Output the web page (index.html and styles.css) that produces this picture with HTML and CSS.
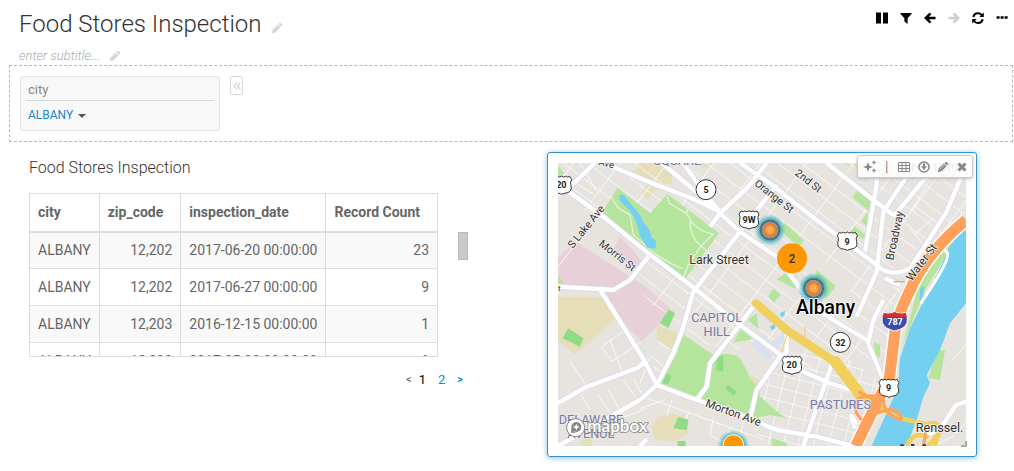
FILE: index.html
```html
<!DOCTYPE html>
<html lang="en">
<head>
<meta charset="utf-8">
<meta name="viewport" content="width=device-width, initial-scale=1">
<title>Food Stores Inspection</title>
<link rel="stylesheet" href="styles.css">
</head>
<body>
<svg class="defs" aria-hidden="true">
  <symbol id="pencil" viewBox="0 0 16 16"><path d="M1 15l1-4.600 7-7L12.600 7l-7 7zM10 2.500l1.300-1.300q.7-.7 1.400 0l2.100 2.100q.7.7 0 1.400L13.500 6z" fill="currentColor"/><path d="M2.500 11.500l2 2M4.500 10.500l5.500-5.500" stroke="#fff" stroke-width=".8"/></symbol>
</svg>
<header class="top">
  <div>
    <div class="title-row"><h1>Food Stores Inspection</h1><button class="edit" aria-label="Edit title"><svg><use href="#pencil"/></svg></button></div>
    <div class="subtitle-row"><input class="subtitle" aria-label="Subtitle" placeholder="enter subtitle..."><button class="edit" aria-label="Edit subtitle"><svg><use href="#pencil"/></svg></button></div>
  </div>
  <div class="toolbar">
    <button aria-label="Pause"><svg viewBox="0 0 14 14"><path d="M1 1.500h5v11H1zM8 1.500h5v11H8z"/></svg></button>
    <button aria-label="Filter"><svg viewBox="0 0 14 14"><path d="M1.500 2h11v1L8.600 7.200V13L5.400 10.600V7.200L1.500 3z"/></svg></button>
    <button aria-label="Back"><svg viewBox="0 0 14 14"><path d="M7.500 2.300L2.800 7l4.700 4.700M3 7h9.500" class="stroke"/></svg></button>
    <button aria-label="Forward" disabled><svg viewBox="0 0 14 14"><path d="M6.500 2.300L11.200 7l-4.700 4.700M11 7H1.500" class="stroke"/></svg></button>
    <button aria-label="Refresh"><svg viewBox="0 0 14 14"><path d="M2.300 6A4.800 4.800 0 0 1 10.900 4.200M11.700 8.200A4.800 4.800 0 0 1 3.100 10" class="stroke thin"/><path d="M12.800 1.500V6H8.300zM1.200 12.600V8.100h4.500z"/></svg></button>
    <button aria-label="More"><svg viewBox="0 0 14 14"><path d="M1.600 5.200h3v2.600h-3zM5.600 5.200h3v2.600h-3zM9.600 5.200h3v2.600h-3z"/></svg></button>
  </div>
</header>
<section class="filters">
  <div class="filter">
    <label for="city">city</label>
    <div class="choice"><select id="city"><option>ALBANY</option></select><svg viewBox="0 0 8 5"><path d="M0 0h8L4 4z"/></svg></div>
  </div>
  <button class="collapse" aria-label="Collapse filters"><svg viewBox="0 0 8 8"><path d="M4 .5L.8 4 4 7.500M7.500.5L4.300 4l3.200 3.500"/></svg></button>
</section>
<main>
  <section class="data">
    <h2>Food Stores Inspection</h2>
    <div class="scroll-area">
      <div class="table-clip">
        <table>
          <thead><tr><th>city</th><th class="sortable">zip_code</th><th>inspection_date</th><th class="sortable">Record Count</th></tr></thead>
          <tbody>
            <tr><td>ALBANY</td><td class="num">12,202</td><td>2017-06-20 00:00:00</td><td class="num">23</td></tr>
            <tr><td>ALBANY</td><td class="num">12,202</td><td>2017-06-27 00:00:00</td><td class="num">9</td></tr>
            <tr><td>ALBANY</td><td class="num">12,203</td><td>2016-12-15 00:00:00</td><td class="num">1</td></tr>
            <tr><td>ALBANY</td><td class="num">12,203</td><td>2017-05-03 00:00:00</td><td class="num">8</td></tr>
          </tbody>
        </table>
      </div>
      <div class="thumb"></div>
    </div>
    <nav class="pages" aria-label="Pages"><span class="off">&lt;</span><span class="now">1</span><a href="#2">2</a><a class="next" href="#next">&gt;</a></nav>
  </section>
  <section class="map-card">
    <svg class="map" viewBox="54 54 1224 849" preserveAspectRatio="xMidYMid slice" role="img" aria-label="Map of Albany">
      <defs>
        <pattern id="blocks" width="112" height="43" patternUnits="userSpaceOnUse" patternTransform="rotate(37)"><path d="M0 1H112M1 0V43" class="lane"/></pattern>
        <pattern id="blocks2" width="44" height="38" patternUnits="userSpaceOnUse" patternTransform="rotate(14)"><path d="M0 1H44M1 0V38" class="lane"/></pattern>
        <radialGradient id="glow"><stop offset=".5" stop-color="#1797a5"/><stop offset=".7" stop-color="#35a9b2" stop-opacity=".75"/><stop offset="1" stop-color="#58c3ca" stop-opacity="0"/></radialGradient>
        <radialGradient id="core"><stop offset="0" stop-color="#ffb35c"/><stop offset=".38" stop-color="#fba245"/><stop offset=".48" stop-color="#ef7f1c"/><stop offset=".6" stop-color="#e8882f"/><stop offset=".66" stop-color="#8a8a8a"/><stop offset=".78" stop-color="#9aa0a6"/><stop offset=".84" stop-color="#59636e"/><stop offset="1" stop-color="#59737e"/></radialGradient>
        <symbol id="us" viewBox="-32 -30 64 60" overflow="visible"><path d="M-24-26q6 5 12 0 6 5 12-1 6 6 12 1 6 5 12 0l6 10q-6 8-2 18 4 16-10 21Q8 24 0 28-8 24-18 23-32 18-28 2q4-10-2-18z" fill="#fff" stroke="#343434" stroke-width="3"/></symbol>
        <g id="pin"><circle r="48" fill="url(#glow)"/><circle r="31" fill="url(#core)"/></g>
        <path id="roads" d="M80 135L190 215 325 325 470 435 600 540 730 635 790 680 870 715 935 735 970 775M54 150L80 135 165 54M190 54L350 120 455 160 540 200M365 54L480 150 600 260 710 335 830 495 980 585 1030 705M430 54L490 140 540 200M600 54L690 115 810 210 890 270 1010 360Q1050 400 1110 370L1150 310 1220 200 1270 80M860 54L1000 165 1060 210M1100 95L1030 200 1010 380 950 515M1010 54V120L975 320M1160 95L1060 215M680 54L620 130 545 200 510 245M710 120L600 260 460 440 430 545 400 625 350 720 300 765 54 903M325 335L270 405 220 435 54 425M180 435L200 465 315 650 350 720 470 765 580 800 710 855 830 875 940 903M54 775L140 725 290 670 315 650M640 485L510 655 500 725 470 765M720 635L650 735 630 820M740 560v60l-20 25M880 645L790 903M1030 465L1000 525 985 590M1035 400L1080 420M1278 770l-30 10-50 75-40 15M300 903l20-20M950 840q-30-60-5 10"/>
      </defs>
      <path class="land" d="M54 54H1278V903H54z"/>
      <g class="sand"><path d="M300 54H400L395 115 350 122 275 90z"/><path d="M320 120l32 14-30 26-20-12zM475 54h45l-25 15zM54 455h125l65 50-138 123-52-38zM350 540l85 30-25 60-60-48zM900 54h100v40zM335 845q15-35 60-42l52 20-5 45-38 22-60-7zM630 690l30 15-8 25-26-22zM125 880h30v23h-30z"/></g>
      <g class="pink"><path d="M54 340l50-52L325 430 400 500 305 588 215 500 180 440 54 425z"/><path d="M240 273l65 75-20 28-70-52z"/></g>
      <path fill="url(#blocks)" d="M54 54H1278V200L1085 480 1020 660 880 650 690 520 470 430 80 160z"/>
      <path fill="url(#blocks)" d="M435 400L690 520 890 650 780 700 650 620 500 600 430 560z"/>
      <path fill="url(#blocks)" d="M270 405l55-65 135 105-30 110-50-25z"/>
      <path fill="url(#blocks2)" d="M740 630l150-10 140 90-80 193H650V750z"/>
      <path class="land" d="M790 330l130 50 20 90-60 10-60-40z"/>
      <g class="lane"><path d="M190 190L54 365M120 54l50 85M54 80l110 70M210 585l40 105M185 605l65-45M215 650l90-60M183 605l35 45M90 650l50 75M280 700l25 48M250 705l50 70M205 735l35 60M172 748l35 50M150 795l-35-60M340 665l50 30M330 630l70 60M355 590l55 35M330 640l-30 75M305 755l85 28 180 65 100 35M300 790l75-25M395 765l-15 50M450 795l-20 45M520 820l-10 50 60 33M230 780l25 35 65-25M570 850l-20 45M610 830l-15 73M1110 250l50 60M1180 220l-60 50M1120 180l80 60M1180 903l60-30 38-40M990 54l30 35M1200 54l-90 150M1278 600l-45 50"/></g>
      <g class="park"><path d="M233 128L330 205 382 147 537 265 437 400 350 345 290 300 185 205zM432 570L520 630q60-8 75 5 25 35 35 65l30 35-5 85-25-10-160-50-108-45z"/><path d="M54 60l18 25-18 10zM54 395l20 20-20 5zM950 138l42 28-5 33-50-42zM982 200v45l-18-15zM945 245l32 25-8 12-40-22zM732 232l60 55-15 18-58-50zM745 378l28 18-8 35-55-28zM830 375l58 48-27 35-40-30zM700 430l22 20-20 22-18-18zM650 505l-28 20 34 28zM605 548l33 35-60 10zM630 720q60 70 110 100l-50-10-45 10zM695 878l45 15v10h-45zM1215 615l-15 90-35-5 25-85zM1000 590l20 10v40l-12-10zM1128 450q-10-30 12-60l90-130 8 40-80 130-70 170z"/></g>
      <g class="grass"><path d="M385 495l20 10-20 45-25-17zM85 550l45 30-10 25-52-25zM415 815l30 10-5 30-40-5zM412 888h25v15h-25zM530 640l20-10v50l-22-5zM565 720l25 20-8 12-27-22zM380 685l15 8-12 25-15-3z"/></g>
      <path d="M382 152l5 22 50 30q10-20 2 0l15 25q20 30 65 38l-35 35-40 60-13 33M210 150l25 40 35 20 10 60 70 60 55 32 25 10M450 230q0 45 30 70l45 40" class="trail"/>
      <g class="water"><path d="M238 150q15-3 25 14l28 35q15 18 17 30l20 25 8 25 13 10-3 22-24-3-22-35q-8-45-30-75l-30-30z"/><path d="M1278 240L1232 300 1195 380 1145 480 1110 550 1080 640 1075 725 995 903H1100L1130 825 1150 755 1170 715 1160 690 1200 615 1230 535 1278 475zM1140 435q5-15 14-10l-5 30-10 20zM720 505l15-8-2 15-10 5zM690 545l14-8 2 13-12 5z"/></g>
      <g fill="#d9e0f1"><path d="M640 590l30-20 20 20-20 20 30 20-15 15-50-40zM670 520l25-25 15 12-25 30zM690 595l40-30 12 10-30 38zM780 500l30-20 8 15-28 18z"/></g>
      <use href="#roads" class="casing"/>
      <use href="#roads" class="road"/>
      <path class="hw-case" d="M1278 225Q1170 315 1120 415T1065 560L1048 700 1010 775 947 903"/>
      <path class="hw-case thin" d="M1150 325q65-25 72 0 10 20-80 150"/>
      <path class="yellow" d="M648 475L740 555 890 655 960 750 1020 790"/>
      <path class="yellow fat" d="M885 650L965 755"/>
      <path class="yellow narrow" d="M1010 785L1080 820 1160 838 1200 860 1165 903M1100 903q20-45 60-28M1160 838q55-20 25 60"/>
      <path class="yellow line" d="M745 560l-20 60M795 545v45"/>
      <path class="hw" d="M1278 225Q1170 315 1120 415T1065 560L1048 700 1010 775 947 903"/>
      <path class="ramp" d="M1020 755q-90-15-70 50l15 20M970 830q100-70 115-5M1030 760q0 50 55 65M1000 805q-20 5-40 40M955 740l50 25M1160 845l-10 58"/>
      <path d="M1060 410h35" stroke="#ffa05c" stroke-width="4"/>
      <g class="label">
        <text x="448" y="356" font-size="37">Lark Street</text>
        <text x="98" y="312" font-size="32" transform="rotate(-51 98 312)">S Lake Ave</text>
        <text x="175" y="300" font-size="32" transform="rotate(38 175 300)">Morris St</text>
        <text x="175" y="60" font-size="28" transform="rotate(12 175 60)">Ave</text>
        <text x="763" y="88" font-size="32" transform="rotate(38 763 88)">2nd St</text>
        <text x="641" y="119" font-size="32" transform="rotate(38 641 119)">Orange St</text>
        <text x="1060" y="347" font-size="34" transform="rotate(-78 1060 347)">Broadway</text>
        <text x="1115" y="410" font-size="34" transform="rotate(-53 1115 410)">Water St</text>
        <text x="494" y="784" font-size="34" transform="rotate(20 494 784)">Morton Ave</text>
        <text x="1127" y="860" font-size="38">Renssel.</text>
        <text x="54" y="437" font-size="24">t</text>
        <path d="M1081 898h10v5h-10zM1113 897h10v6h-10zM1148 898h10v5h-10z" fill="#333"/>
      </g>
      <g class="area">
        <text x="530" y="531" text-anchor="middle">CAPITOL</text><text x="530" y="574" text-anchor="middle">HILL</text>
        <text x="901" y="791" text-anchor="middle">PASTURES</text>
        <text x="153" y="837" text-anchor="middle">DELAWARE</text><text x="153" y="880" text-anchor="middle">AVENUE</text>
        <text x="412" y="60" text-anchor="middle">SQUARE</text><text x="1113" y="78">HISTORIC</text>
      </g>
      <use href="#pin" x="690" y="255"/><use href="#pin" x="821" y="430"/>
      <circle cx="580" cy="903" r="49" fill="url(#glow)"/><circle cx="580" cy="900" r="31" fill="#ff9800" stroke="#fff" stroke-width="3"/>
      <circle cx="756" cy="340" r="45" fill="#ff9800"/><text class="cluster" x="756" y="353">2</text>
      <text class="city" x="768" y="508">Albany</text>
      <g class="shield">
        <circle cx="498" cy="134" r="30"/><text x="498" y="144">5</text>
        <circle cx="901" cy="592" r="30"/><text x="901" y="602">32</text>
        <use href="#us" x="33" y="90" width="64" height="60"/><text x="64" y="130">20</text>
        <use href="#us" x="595" y="194" width="64" height="60"/><text x="627" y="233">9W</text>
        <use href="#us" x="890" y="258" width="64" height="60"/><text x="921" y="299">9</text>
        <use href="#us" x="724" y="630" width="64" height="60"/><text x="755" y="670">20</text>
        <use href="#us" x="1015" y="699" width="64" height="60"/><text x="1046" y="739">9</text>
        <path d="M1032 503q16 6 32-2 17 8 33 2 8 18 4 30-6 18-37 25-31-7-37-25-4-12 5-30z" fill="#3a4dae" stroke="#fff" stroke-width="3"/><path d="M1032 503q16 6 32-2 17 8 33 2l4 13h-74z" fill="#d32f3b"/><text class="light" x="1065" y="541">787</text>
      </g>
      <g class="brand"><circle cx="107" cy="848" r="27"/><circle class="ring" cx="109" cy="846" r="15"/><path d="M94 847v16h15q-12-2-15-16z" fill="#777"/><path class="star" d="M109 836l3 7 7 3-7 3-3 7-3-7-7-3 7-3z"/><text x="142" y="860">mapbox</text></g>
    </svg>
    <div class="actions">
      <button aria-label="Insights"><svg viewBox="0 0 14 14"><path d="M5 2l1.300 3.700L10 7 6.300 8.300 5 12 3.700 8.300 0 7l3.700-1.300zM11 0l.7 1.800 1.800.7-1.800.7L11 5l-.7-1.800-1.800-.7 1.800-.7zM11 8l.7 1.800 1.800.7-1.800.7L11 13l-.7-1.800-1.800-.7 1.800-.7z"/></svg></button>
      <span>|</span>
      <button aria-label="Table"><svg viewBox="0 0 14 14"><path d="M1.500 2.500h11v9h-11zM1.500 5.500h11M1.500 8.500h11M5 2v10M9 2v10" class="outline"/></svg></button>
      <button aria-label="Download"><svg viewBox="0 0 14 14"><circle cx="7" cy="7" r="5" class="outline bold"/><path d="M6 3.500h2v3h2L7 10 4 6.500h2z"/></svg></button>
      <button aria-label="Edit"><svg><use href="#pencil"/></svg></button>
      <button aria-label="Remove"><svg viewBox="0 0 14 14"><path d="M3.500 3.500l7 7M10.500 3.500l-7 7" class="cross"/></svg></button>
    </div>
    <svg class="resize" viewBox="0 0 6 6"><path d="M4 0h2v6H0V4h4z"/></svg>
  </section>
</main>
</body>
</html>
```
FILE: styles.css
```css
* { box-sizing: border-box; }
body { margin: 0; background: #fff; color: #666; font: 14px/20px Roboto, "Liberation Sans", sans-serif; }
button { border: 0; padding: 0; background: none; color: inherit; font: inherit; }
h1, h2 { margin: 0; font-weight: 300; color: #333; }
.defs { position: absolute; width: 0; height: 0; }

.top { display: flex; justify-content: space-between; padding: 8px 5px 0 19px; }
.title-row { display: flex; align-items: center; gap: 10px; height: 32px; }
h1 { font-size: 24px; line-height: 32px; }
.edit { display: flex; color: #d2d2d2; }
.edit svg { width: 12px; height: 12px; }
.title-row .edit { padding-top: 8px; }
.subtitle-row { display: flex; align-items: center; gap: 4px; padding-top: 7px; height: 25px; }
.subtitle { width: 86px; height: 18px; padding: 0; border: 0; background: none; font: italic 300 13px/18px Roboto, sans-serif; }
.subtitle::placeholder { color: #aaa; opacity: 1; }
.toolbar { display: flex; gap: 10px; height: 20px; color: #000; }
.toolbar button { display: flex; align-items: center; }
.toolbar button:disabled { color: #ccc; }
.toolbar svg { width: 14px; height: 14px; fill: currentColor; }
.toolbar .stroke { fill: none; stroke: currentColor; stroke-width: 2.5; }
.toolbar .thin { stroke-width: 2; }

.filters { display: flex; align-items: flex-start; gap: 10px; margin: 0 1px 0 9px; padding: 10px; min-height: 77px; border: 1px dashed #b8b8b8; }
.filter { width: 200px; padding: 3px 5px 5px; border: 1px solid #e3e3e3; border-radius: 3px; background: #f8f8f8; }
.filter label { display: block; padding: 0 2px; height: 21px; border-bottom: 1px solid #d8d8d8; font-size: 13px; line-height: 19px; color: #888; }
.choice { display: flex; align-items: center; gap: 4px; padding: 4px 2px 0; height: 24px; }
.choice select { appearance: none; padding: 0; border: 0; background: none; color: #2087cc; font: 12px/20px Roboto, sans-serif; }
.choice svg { width: 8px; height: 5px; margin-top: 2px; fill: #555; }
.collapse { display: flex; align-items: center; justify-content: center; width: 13px; height: 19px; border: 1px solid #d8d8d8; border-radius: 2px; }
.collapse svg { width: 8px; height: 8px; fill: none; stroke: #bbb; stroke-width: 1; }

main { display: grid; grid-template-columns: 518fr 430fr; align-items: start; padding: 10px 37px 12px 29px; }
.data { padding-top: 5px; }
h2 { font-size: 16px; line-height: 22px; }
.scroll-area { display: flex; gap: 20px; padding-top: 14px; }
.table-clip { height: 164px; overflow: hidden; border-bottom: 1px solid #ddd; }
table { border-collapse: collapse; }
th, td { height: 37px; padding: 0 8px; border: 1px solid #ddd; text-align: left; white-space: nowrap; }
th { height: 38px; border-bottom: 2px solid #ddd; font-weight: 700; }
.sortable { padding-right: 17px; }
.num { text-align: right; }
tbody tr:nth-child(odd) { background: #f9f9f9; }
.thumb { width: 10px; height: 28px; margin-top: 39px; background: #cacaca; border: 1px solid #bbb; }
.pages { display: flex; align-items: center; gap: 12px; width: 434px; justify-content: flex-end; padding-top: 14px; font-size: 13px; line-height: 18px; }
.pages a { color: #2087cc; text-decoration: none; }
.pages .off { margin-right: -5px; font-size: 11px; }
.pages .now { color: #000; }
.pages .next { font-size: 11px; font-weight: 700; }

.map-card { position: relative; padding: 10px; border: 1px solid #3590cb; border-radius: 3px; box-shadow: 0 1px 6px #8cc4e8; }
.map { display: block; width: 100%; height: auto; aspect-ratio: 408 / 283; }
.resize { position: absolute; right: 9px; bottom: 9px; width: 6px; height: 6px; fill: #aaa; }
.actions { position: absolute; top: 2px; right: 3px; display: flex; align-items: center; gap: 6px; height: 23px; padding: 0 3px 0 5px; border: 1px solid #ccc; border-radius: 3px; background: rgba(255, 255, 255, .85); box-shadow: 0 1px 3px #bbb; color: #888; }
.actions button { display: flex; }
.actions svg { width: 14px; height: 14px; fill: currentColor; }
.actions span { padding: 0 2px; width: 8px; }
.actions button:nth-last-child(2) svg { width: 12px; }
.actions .outline { fill: none; stroke: currentColor; }
.actions .bold { stroke-width: 1.5; }
.actions .cross { stroke: currentColor; stroke-width: 3; }

.land { fill: #e7e4df; }
.sand { fill: #e6ddb9; }
.pink { fill: #e8d0d9; }
.park { fill: #b5e59d; }
.grass { fill: #8edc86; }
.water { fill: #75cff0; }
.lane { fill: none; stroke: #fafafa; stroke-width: 3; }
.trail { fill: none; stroke: #e1f4d5; stroke-width: 4; }
.casing, .road { fill: none; stroke: #d9d9ea; stroke-width: 18; stroke-linejoin: round; }
.road { stroke: #fff; stroke-width: 13; }
.hw-case { fill: none; stroke: #fff; stroke-width: 42; }
.hw-case.thin { stroke-width: 9; }
.hw { fill: none; stroke: #ffa05c; stroke-width: 33; }
.ramp { fill: none; stroke: #ffa05c; stroke-width: 9; }
.yellow { fill: none; stroke: #f1cf5c; stroke-width: 25; stroke-linecap: round; stroke-linejoin: round; }
.yellow.fat { stroke-width: 34; }
.yellow.narrow { stroke-width: 14; }
.yellow.line { stroke-width: 3; }
.map text { font-family: Roboto, sans-serif; }
.label text { fill: #333; stroke: #f5f3ef; stroke-width: 5; paint-order: stroke; }
.area text { fill: #747ba8; font-size: 38px; stroke: #eeeae7; stroke-width: 4; paint-order: stroke; }
.map .city { fill: #000; font-size: 58px; font-weight: 500; stroke: #fff; stroke-width: 5; paint-order: stroke; }
.map .cluster { fill: #333; font-size: 36px; font-weight: 500; text-anchor: middle; }
.shield circle { fill: #fff; stroke: #343434; stroke-width: 3; }
.shield text { fill: #222; font-size: 27px; font-weight: 700; text-anchor: middle; }
.shield .light { fill: #fff; }
.brand circle { fill: #fff; stroke: #888; stroke-width: 3; }
.brand .ring { fill: #888; stroke: none; }
.brand .star { fill: #fff; }
.brand text { fill: #fff; stroke: #888; stroke-width: 5; paint-order: stroke; font-family: Lato, sans-serif; font-size: 51px; font-weight: 700; }
```
